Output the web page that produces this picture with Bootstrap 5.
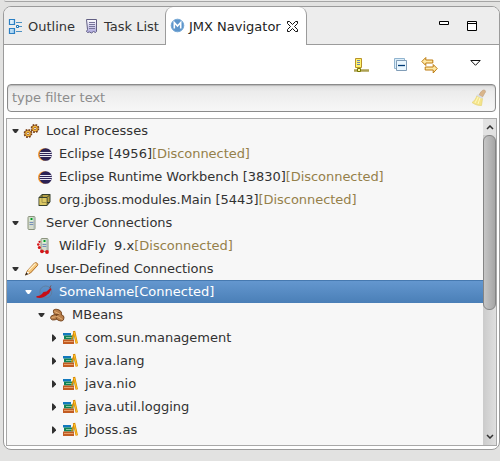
<!DOCTYPE html>
<html lang="en">
<head>
<meta charset="utf-8">
<meta name="viewport" content="width=device-width, initial-scale=1">
<title>JMX Navigator</title>
<link href="https://cdn.jsdelivr.net/npm/bootstrap@5.3.0/dist/css/bootstrap.min.css" rel="stylesheet">
<style>
body{width:500px;height:461px;background:#e2e2e1;font:13px/23px "DejaVu Sans",sans-serif;color:#323232;overflow:hidden}
svg{display:block;flex:none}
.upper-pane{height:2px;margin:0 0 4px 4px;border-bottom:1px solid #a5a5a5;border-bottom-left-radius:4px;background:#e9e9e8}
.view{width:497px;height:444px;margin-left:3px;border:1px solid #9b9b9b;border-radius:8px;background:#fff}
.tabs{height:38px;background:#ededed;border-bottom:1px solid #9b9b9b;border-radius:7px 7px 0 0}
.tab-item{height:39px;white-space:pre}
.tab-item.first{padding-left:4px}
.tab-item.second{padding-left:10px}
.tab-item span{margin-left:4px}
.tab-item.second span{margin-left:3px}
.tab-current span{margin-left:3px}
.tab-current{width:142px;height:38px;margin-left:auto;padding-left:4px;background:#fff;border:1px solid #9b9b9b;border-width:0 1px;border-radius:8px 8px 0 0;color:#1e1e1e}
.tab-strip{width:303px;flex:none}
.window-buttons{padding:14px 22px 0 0;gap:18px}
.tools{height:39px;padding:12px 18px 0 0}
.filter{width:489px;height:28px;margin-left:3px;border:1px solid #8b8b8b;border-radius:4px;background:linear-gradient(#dedede,#ececec 25%,#f7f7f7);box-shadow:inset 0 1px 1px #b9b9b9;color:#8c8c8c;padding:0 8px 2px 4px}
.tree-box{width:491px;height:328px;margin:6px 0 0 2px;border:1px solid #a8a8a8;background:#f7f7f7}
.tree-row{height:23px;white-space:pre}
.tree-row .twisty{width:16px;display:flex;justify-content:center;flex:none}
.tree-row .label{margin-left:6px}
.lv1{padding-left:13px}.lv2{padding-left:26px}.lv3{padding-left:39px}
.tight{letter-spacing:-.05px}
.state{color:#95804a}
.chosen{background:linear-gradient(#4679b0 0,#4679b0 1px,#6497cf 1px,#4a7fb7);color:#fff}
.track{width:13px;background:linear-gradient(90deg,#cbcbcb,#dfdfdf)}
.track-end{height:16px;background:#e2e2e2}
.thumb{height:175px;border:1px solid #858585;border-radius:6px;background:linear-gradient(90deg,#c6c6c6,#a6a6a6)}
</style>
<script src="https://cdn.jsdelivr.net/npm/bootstrap@5.3.0/dist/js/bootstrap.bundle.min.js"></script>
</head>
<body>
<svg width="0" height="0" class="position-absolute">
<defs>
<linearGradient id="purple" x2="0" y2="1"><stop stop-color="#fff"/><stop offset="1" stop-color="#aaa5dc"/></linearGradient>
<linearGradient id="sky" x2="1" y2="1"><stop stop-color="#fff"/><stop offset="1" stop-color="#8fc6ee"/></linearGradient>
<symbol id="open" viewBox="0 0 7 4"><path d="M.5 0h6v1L4.200 4H2.800L.5 1z" fill="currentColor"/></symbol>
<symbol id="shut" viewBox="0 0 4 8"><path d="M0 .5h1l3 3v1l-3 3H0z" fill="#303030"/></symbol>
<symbol id="gear" viewBox="0 0 9 9"><circle cx="4.500" cy="4.500" r="3.600" fill="none" stroke="#7c4216" stroke-width="1.800" stroke-dasharray="1.700 1.130"/><circle cx="4.500" cy="4.500" r="3.300" fill="#7c4216"/><circle cx="4.500" cy="4.500" r="2.700" fill="#fbbd3c"/><circle cx="4.500" cy="4.500" r="1.200" fill="#fff" stroke="#7c4216" stroke-width=".7"/></symbol>
<symbol id="gears" viewBox="0 0 16 16"><use href="#gear" x="0" y="6" width="9" height="9"/><use href="#gear" x="7" y="1" width="9" height="9"/></symbol>
<symbol id="eclipse" viewBox="0 0 16 16"><circle cx="7.700" cy="8.500" r="6.200" fill="#f59a32"/><circle cx="9.200" cy="8.500" r="6.300" fill="#2c2255"/><path d="M3.500 6.500h11.500M3 8.500h12.500M3.500 10.500h11.500" stroke="#e8e6f2"/></symbol>
<symbol id="cube" viewBox="0 0 16 16"><path d="M2.500 5.500l3-3h8v7.500l-3 3.500h-8z" fill="#b6a044" stroke="#36402f"/><path d="M2.500 5.500h8v8M10.500 5.500l3-3M5.500 2.500v8h8M5.500 10.500l-3 3" fill="none" stroke="#36402f"/><path d="M3 6h7v7H3z" fill="#dcc965"/><path d="M5.500 6v4.500H10" fill="none" stroke="#a3944a"/></symbol>
<symbol id="server" viewBox="0 0 16 16"><rect x="4.500" y="1.500" width="7" height="13" rx="1" fill="#d6dccb" stroke="#8b947f"/><path d="M6 3h4v3H6z" fill="#d9f4d8"/><path d="M7 3h2v2H7z" fill="#009824"/><path d="M6 7.500h4M6 9.500h4" stroke="#758fba"/><path d="M10.500 2v12" stroke="#aab6bc"/></symbol>
<symbol id="wildfly" viewBox="0 0 16 16"><use href="#server" x="0" y="-1" width="16" height="16"/><g fill="#d51518"><circle cx="3" cy="3.800" r="1.100"/><circle cx="1.800" cy="6.500" r="1.300"/><circle cx="2.800" cy="9.500" r="1.500"/><circle cx="5.500" cy="13.300" r="1.900"/><circle cx="10.500" cy="14" r="1.900"/></g></symbol>
<symbol id="pencil" viewBox="0 0 16 16"><path d="M2 14l2-4.500 7-7.500c1.500-1 4 .5 3 2.500L7 12z" fill="#f5c477" stroke="#ac6b24"/><path d="M5 9.500l7-7" stroke="#fff0c8" stroke-width="1.300"/><path d="M2 14L4 10.500l2 1.500z" fill="#fff"/><path d="M1.500 14.500l1.500-3 1.500 1.500z" fill="#171717"/></symbol>
<symbol id="plug" viewBox="0 0 16 16"><circle cx="9.300" cy="8" r="6" fill="none" stroke="#607b9b" stroke-width=".8"/><path d="M0 12c3 .3 5-1 7-4l3-.5 4-3.500 1 1-2.500 4.500-1.500 1C8 13.500 4 14.500 0 13.500z" fill="#c60e17"/><path d="M13.500 4.500c0-1.500.5-2 1-3" fill="none" stroke="#764b46"/></symbol>
<symbol id="beans" viewBox="0 0 16 16"><g stroke="#75451f" stroke-width=".9" fill="#b97e49"><ellipse cx="8" cy="5.500" rx="4.500" ry="2.900" transform="rotate(30 8 5.500)"/><ellipse cx="5" cy="10.300" rx="4" ry="2.600" transform="rotate(-15 5 10.300)"/><ellipse cx="10.500" cy="10.500" rx="4" ry="3.200" transform="rotate(25 10.500 10.500)"/></g><path d="M5 4.500l6 3M2 10.500l6-1M8 9.500l5 3" stroke="#e6b47a" stroke-width=".9"/></symbol>
<symbol id="books" viewBox="0 0 15 16"><path d="M0 3h8v2.500H0z" fill="#1279bd"/><path d="M1 5.500h9.500v4H1z" fill="#108354"/><path d="M3 7.500h6" stroke="#86c7a0"/><path d="M0 9.500h11V14H0z" fill="#c25c22"/><path d="M1 11.500h9.500" stroke="#e79f6a"/><path d="M11 1L13.800 13.500" stroke="#d98900" stroke-width="2.400"/><path d="M11 3L8.800 9" stroke="#d98900" stroke-width="1.500"/><path d="M11.200 2l2.500 11" stroke="#ffc62a" stroke-width="1"/></symbol>
</defs>
</svg>

<div class="upper-pane"></div>
<main class="view">
  <header class="tabs d-flex justify-content-between">
    <div class="tab-strip d-flex">
      <div class="tab-item first d-flex align-items-center">
        <svg width="16" height="16"><g fill="url(#sky)" stroke="#2b7fc3" stroke-width="1.200"><path d="M1.500.5h5v5h-5zM1.500 9.500h5v5h-5z"/></g><path d="M8 3.500h6M11 7.500h3M8 12.500h6" stroke="#4c91c3"/><path d="M8.500 6.500h2v2h-2z" fill="#fff" stroke="#1873b7"/></svg>
        <span>Outline</span>
      </div>
      <div class="tab-item second d-flex align-items-center">
        <svg width="16" height="16"><path d="M1.500.5h10v12l-1 1-2-1-2 1.500-2-1-2 .5-1-1 1-2z" fill="url(#purple)" stroke="#625f83"/><path d="M4 3.500h6M4 5.500h6M4 7.500h6M4 9.500h6" stroke="#77749a"/></svg>
        <span>Task List</span>
      </div>
      <div class="tab-current d-flex align-items-center">
        <svg width="16" height="16"><circle cx="7.500" cy="7.500" r="6.300" fill="#5d95cb" stroke="#76a8d5"/><path d="M4.300 10.500V4.500L7.500 8l3.200-3.500v6" fill="none" stroke="#fff" stroke-width="1.600"/></svg>
        <span>JMX Navigator</span>
        <svg width="11" height="11" class="ms-auto me-2"><path d="M.5.500h2l3 3 3-3h2v2l-3 3 3 3v2h-2l-3-3-3 3h-2v-2l3-3-3-3z" fill="#fff" stroke="#111"/></svg>
      </div>
    </div>
    <div class="window-buttons d-flex">
      <svg width="10" height="4"><path d="M.5.500h9v3h-9z" fill="#fff" stroke="#000"/></svg>
      <svg width="10" height="10"><path d="M.5.500h9v9h-9zM0 2.500h10" fill="#fff" stroke="#000"/></svg>
    </div>
  </header>
  <div class="tools d-flex justify-content-end">
    <svg width="16" height="16"><path d="M1.500 1.500h6v9h-6z" fill="#fff36c" stroke="#b8922a"/><path d="M3 3.500h3M3 5.500h3M3 7.500h3" stroke="#6d86b4"/><path d="M0 13.500h15" stroke="#ada052" stroke-width="2.500"/><path d="M3.500 11.500h3v3h-3z" fill="#fff9a4" stroke="#777800"/></svg>
    <svg width="16" height="16" style="margin-left:24px"><path d="M.5 1.500h10v10H.5z" fill="#dceefa" stroke="#91b4cf"/><path d="M2.500 3.500h10v10h-10z" fill="#eaf7ff" stroke="#819db7"/><path d="M4 8.500h7" stroke="#003b76" stroke-width="1.300"/></svg>
    <svg width="17" height="17" style="margin-left:11px"><path d="M.8 4.500l4-4v2.500h7v3h-7v2.500zM16.200 11.500l-4-4v2.500h-8v3h8v3z" fill="#ffe9a6" stroke="#bd7b10"/></svg>
    <svg width="11" height="7" style="margin:3px 0 0 32px"><path d="M.8.500h9.400L5.500 5.300z" fill="#fff" stroke="#111"/></svg>
  </div>
  <div class="filter d-flex align-items-center justify-content-between">
    <span>type filter text</span>
    <svg width="16" height="17"><path d="M8 6c1-2 3-5 4.500-5 2.500 0 2.500 2 1 3.500L11.500 8z" fill="#d9b58a" stroke="#c2a284" stroke-width=".7"/><path d="M6 6.500l5.500 3-1 7c-3 0-6-.5-9.500-3 2.500-1.500 4-4 5-7z" fill="#f4e48b" stroke="#e5d375" stroke-width=".7"/><path d="M7 8L4 14M9 9l-2 6" stroke="#fff9bf"/><path d="M6 6l5.500 3" stroke="#d7dce6" stroke-width="1.500"/></svg>
  </div>
  <section class="tree-box d-flex">
    <div class="flex-grow-1">
      <div class="tree-row d-flex align-items-center"><span class="twisty"><svg width="7" height="4"><use href="#open"/></svg></span><svg width="17" height="16"><use href="#gears"/></svg><span class="label">Local Processes</span></div>
      <div class="tree-row lv1 d-flex align-items-center"><span class="twisty"></span><svg width="17" height="16"><use href="#eclipse"/></svg><span class="label">Eclipse [4956]<span class="state tight">[Disconnected]</span></span></div>
      <div class="tree-row lv1 d-flex align-items-center"><span class="twisty"></span><svg width="17" height="16"><use href="#eclipse"/></svg><span class="label tight">Eclipse Runtime Workbench [3830]<span class="state">[Disconnected]</span></span></div>
      <div class="tree-row lv1 d-flex align-items-center"><span class="twisty"></span><svg width="17" height="16"><use href="#cube"/></svg><span class="label tight">org.jboss.modules.Main [5443]<span class="state">[Disconnected]</span></span></div>
      <div class="tree-row d-flex align-items-center"><span class="twisty"><svg width="7" height="4"><use href="#open"/></svg></span><svg width="17" height="16"><use href="#server"/></svg><span class="label tight">Server Connections</span></div>
      <div class="tree-row lv1 d-flex align-items-center"><span class="twisty"></span><svg width="17" height="16"><use href="#wildfly"/></svg><span class="label">WildFly  9.x<span class="state">[Disconnected]</span></span></div>
      <div class="tree-row d-flex align-items-center"><span class="twisty"><svg width="7" height="4"><use href="#open"/></svg></span><svg width="17" height="16"><use href="#pencil"/></svg><span class="label tight">User-Defined Connections</span></div>
      <div class="tree-row lv1 chosen d-flex align-items-center"><span class="twisty"><svg width="7" height="4"><use href="#open"/></svg></span><svg width="17" height="16"><use href="#plug"/></svg><span class="label">SomeName[Connected]</span></div>
      <div class="tree-row lv2 d-flex align-items-center"><span class="twisty"><svg width="7" height="4"><use href="#open"/></svg></span><svg width="17" height="16"><use href="#beans"/></svg><span class="label">MBeans</span></div>
      <div class="tree-row lv3 d-flex align-items-center"><span class="twisty"><svg width="4" height="8"><use href="#shut"/></svg></span><svg width="17" height="16"><use href="#books"/></svg><span class="label">com.sun.management</span></div>
      <div class="tree-row lv3 d-flex align-items-center"><span class="twisty"><svg width="4" height="8"><use href="#shut"/></svg></span><svg width="17" height="16"><use href="#books"/></svg><span class="label">java.lang</span></div>
      <div class="tree-row lv3 d-flex align-items-center"><span class="twisty"><svg width="4" height="8"><use href="#shut"/></svg></span><svg width="17" height="16"><use href="#books"/></svg><span class="label">java.nio</span></div>
      <div class="tree-row lv3 d-flex align-items-center"><span class="twisty"><svg width="4" height="8"><use href="#shut"/></svg></span><svg width="17" height="16"><use href="#books"/></svg><span class="label">java.util.logging</span></div>
      <div class="tree-row lv3 d-flex align-items-center"><span class="twisty"><svg width="4" height="8"><use href="#shut"/></svg></span><svg width="17" height="16"><use href="#books"/></svg><span class="label">jboss.as</span></div>
    </div>
    <div class="track d-flex flex-column">
      <div class="track-end d-flex align-items-center justify-content-center"><svg width="8" height="5"><path d="M1 4l3-3 3 3" fill="none" stroke="#333" stroke-width="1.500"/></svg></div>
      <div class="thumb"></div>
      <div class="mt-auto d-flex align-items-center justify-content-center" style="height:17px"><svg width="8" height="5"><path d="M1 1l3 3 3-3" fill="none" stroke="#333" stroke-width="1.500"/></svg></div>
    </div>
  </section>
</main>
</body>
</html>
